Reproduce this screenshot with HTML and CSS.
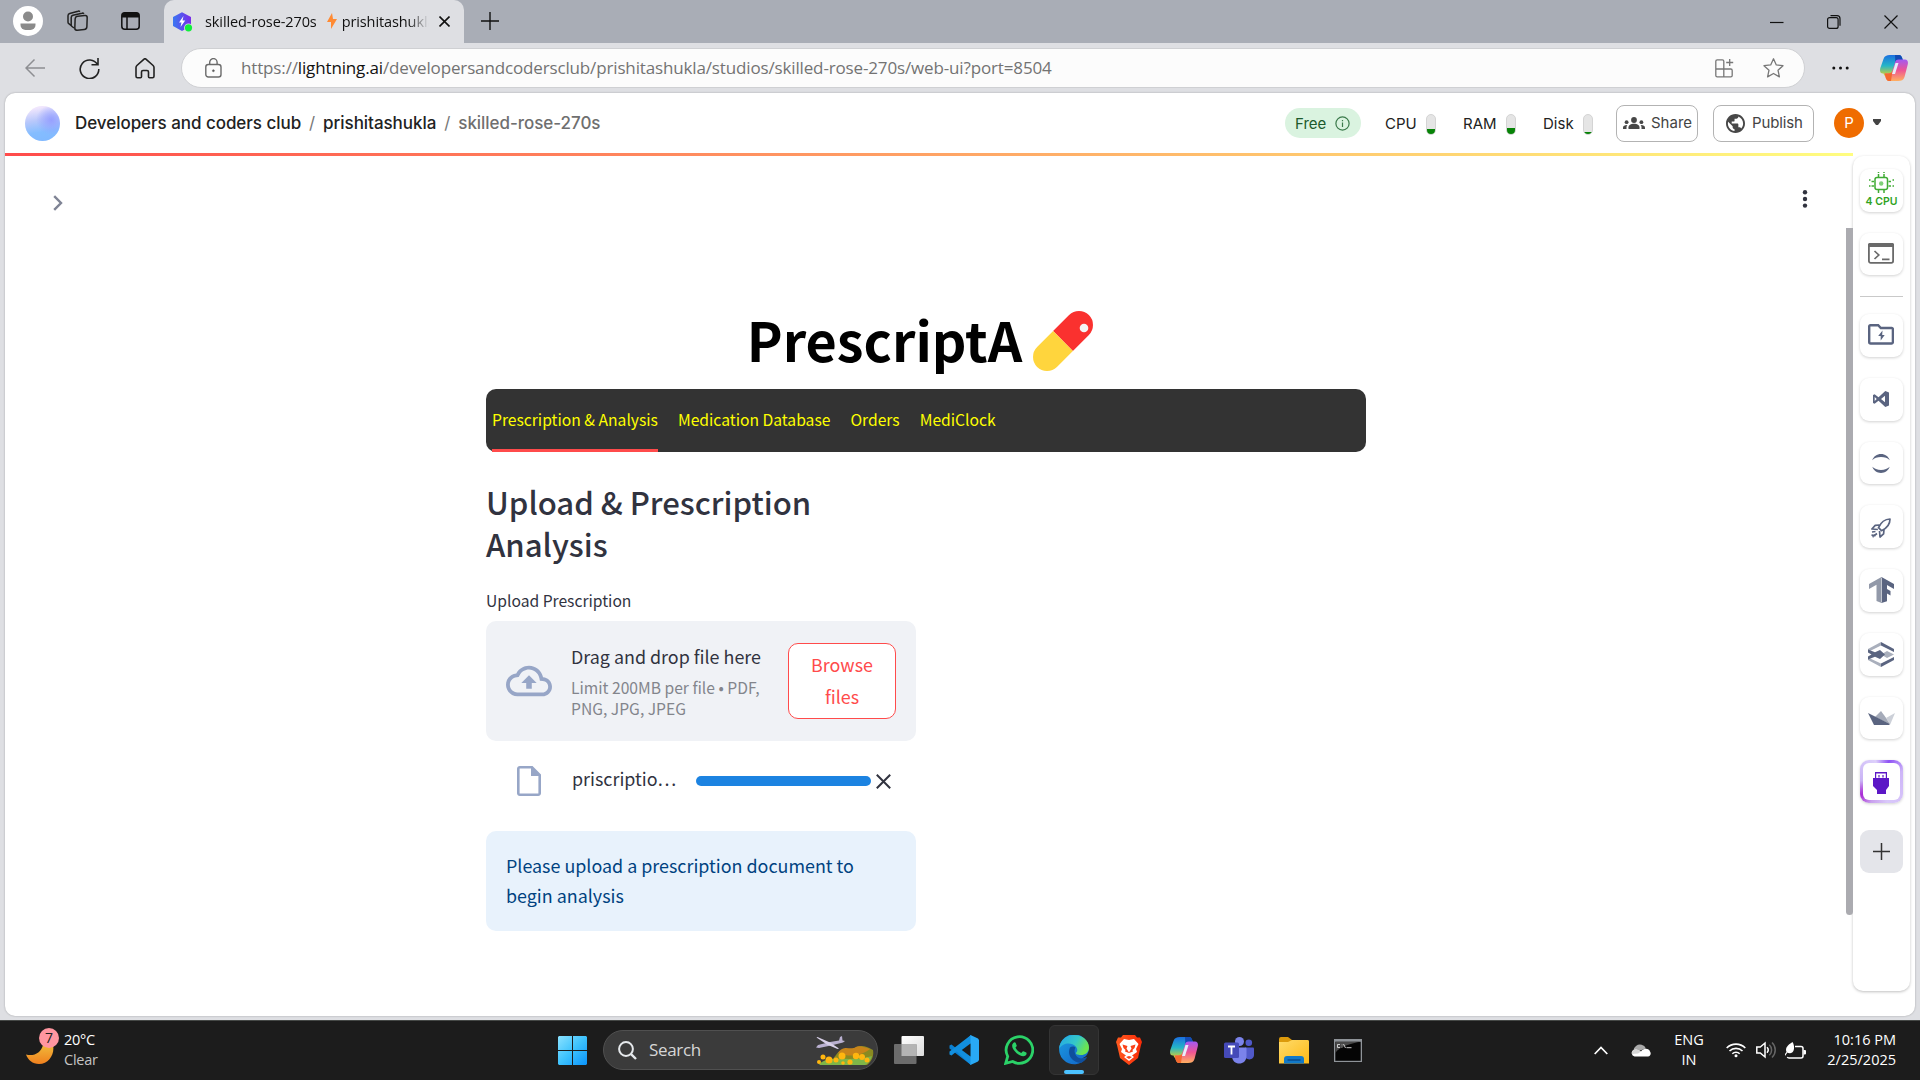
FILE: index.html
```html
<!DOCTYPE html>
<html lang="en">
<head>
<meta charset="utf-8">
<title>skilled-rose-270s</title>
<link rel="stylesheet" href="styles.css">
</head>
<body>
<div class="titlebar">
  <div class="title-left">
    <svg class="profile" width="30" height="30" viewBox="0 0 30 30"><circle cx="15" cy="15" r="15" fill="#fff"/><circle cx="15" cy="10.500" r="5" fill="#8b8b8b"/><path d="M7.500 17.500h15v1.500a5 5 0 0 1-5 5h-5a5 5 0 0 1-5-5z" fill="#8b8b8b"/></svg>
    <svg class="spaces" width="22" height="22" viewBox="0 0 22 22" fill="none" stroke="#222" stroke-width="1.500"><rect x="9" y="6" width="12" height="14" rx="2.500" transform="rotate(2 15 13) skewY(-8) translate(0 2)"/><path d="M8 18l-2-1.500a2 2 0 0 1-.8-1.700V7.500a2.500 2.500 0 0 1 1.700-2.300L16 3.200a2 2 0 0 1 2 .6M5 15.500l-2.200-1.800a2 2 0 0 1-.8-1.500V5.800a2.500 2.500 0 0 1 1.700-2.300L12 1.200a2 2 0 0 1 2 .4"/></svg>
    <svg class="tabmenu" width="19" height="18" viewBox="0 0 19 18" fill="none" stroke="#111" stroke-width="1.500"><rect x=".8" y=".8" width="17.400" height="16.400" rx="3"/><path d="M6 5v12"/><path d="M1 3.500a3 3 0 0 1 3-3h11a3 3 0 0 1 3 3V5.500H1z" fill="#111" stroke="none"/></svg>
  </div>
  <div class="tab">
    <svg width="20" height="20" viewBox="0 0 20 20"><defs><linearGradient id="hx" x1="0" x2="1"><stop offset="0" stop-color="#3a78f2"/><stop offset="1" stop-color="#7a2be8"/></linearGradient></defs><path d="M9 .3L18 5v9l-9 5-9-5V5z" fill="url(#hx)"/><path d="M10.500 4L6 10.500h2.500L7.500 15l4.700-6.500H9.500z" fill="#fff"/><circle cx="15.500" cy="15.800" r="4.400" fill="#dedfe3"/><circle cx="15.500" cy="15.800" r="3.600" fill="#12ee3c"/></svg>
    <div class="tab-title"><span>skilled-rose-270s</span><svg width="10" height="16" viewBox="0 0 10 16"><path d="M5 0L0 9h4v7l6-10H6z" fill="#ff8a33"/></svg><span>prishitashukla</span></div>
    <svg class="tab-close" width="11" height="11" viewBox="0 0 11 11" stroke="#111" stroke-width="1.600"><path d="M.5 .5l10 10M10.500 .5l-10 10"/></svg>
  </div>
  <svg class="newtab" width="18" height="18" viewBox="0 0 18 18" stroke="#111" stroke-width="1.400"><path d="M9 0v18M0 9h18"/></svg>
  <div class="window-buttons">
    <svg width="14" height="14" viewBox="0 0 14 14" fill="none" stroke="#111"><path d="M0 7.500h13.500" stroke-width="1.200"/></svg>
    <svg width="14" height="14" viewBox="0 0 14 14" fill="none" stroke="#111" stroke-width="1.200"><rect x=".6" y="2.600" width="10.500" height="10.800" rx="2"/><path d="M3.500 .7h6.500a3 3 0 0 1 3 3v7"/></svg>
    <svg width="14" height="14" viewBox="0 0 14 14" stroke="#111" stroke-width="1.200"><path d="M.5 .5l13 13M13.500 .5l-13 13"/></svg>
  </div>
</div>
<div class="toolbar">
  <svg class="nav-back" width="20" height="20" viewBox="0 0 20 20" fill="none" stroke="#8d8e92" stroke-width="1.500"><path d="M20 10H1M9.500 1.500L1 10l8.500 8.500"/></svg>
  <svg class="nav-reload" width="21" height="21" viewBox="0 0 21 21" fill="none" stroke="#222" stroke-width="1.600"><path d="M18.500 6.500A9.300 9.300 0 1 0 19.800 11M19 0v6.700h-6.500"/></svg>
  <svg class="nav-home" width="20" height="21" viewBox="0 0 20 21" fill="none" stroke="#222" stroke-width="1.600"><path d="M1 9.500c0-.8.300-1.400.9-2L8.800 1.300a1.800 1.800 0 0 1 2.400 0l6.900 6.200c.6.600.9 1.200.9 2v8.700a1.500 1.500 0 0 1-1.500 1.500h-3a1 1 0 0 1-1-1V14a1.500 1.500 0 0 0-1.500-1.500H8A1.500 1.500 0 0 0 6.500 14v4.700a1 1 0 0 1-1 1h-3A1.500 1.500 0 0 1 1 18.200z"/></svg>
  <div class="address">
    <svg class="lock" width="17" height="20" viewBox="0 0 17 20" fill="none" stroke="#6b6b6b" stroke-width="1.400"><rect x=".8" y="6.500" width="15.200" height="12.500" rx="2.500"/><path d="M4.700 6.500V4.300a3.700 3.700 0 0 1 7.400 0v2.200"/><circle cx="8.400" cy="12.700" r="1" fill="#555" stroke-width=".6"/></svg>
    <div class="url">https://<b>lightning.ai</b><span>/developersandcodersclub/prishitashukla/studios/skilled-rose-270s/web-ui?port=8504</span></div>
    <svg class="apps" width="19" height="19" viewBox="0 0 19 19" fill="none" stroke="#777" stroke-width="1.300"><path d="M8.800 10V2.200a1.400 1.400 0 0 0-1.400-1.400H2.200A1.400 1.400 0 0 0 .8 2.200v14.300a1.400 1.400 0 0 0 1.400 1.400h13.600a1.400 1.400 0 0 0 1.400-1.400v-5.100a1.400 1.400 0 0 0-1.400-1.400H.8M8.800 10v8M14.700 0v7M11.200 3.500h7"/></svg>
    <svg class="star" width="21" height="20" viewBox="0 0 21 20" fill="none" stroke="#777" stroke-width="1.300" stroke-linejoin="round"><path d="M10.500 .8l2.800 6.100 6.700.8-5 4.500 1.400 6.700-5.900-3.400-5.900 3.400L6 12.200 1 7.700l6.700-.8z"/></svg>
  </div>
  <svg class="dots" width="17" height="4" viewBox="0 0 17 4" fill="#111"><circle cx="1.800" cy="2" r="1.500"/><circle cx="8.500" cy="2" r="1.500"/><circle cx="15.200" cy="2" r="1.500"/></svg>
  <svg class="copilot" width="28" height="26" viewBox="0 0 28 26"><use href="#copilot"/></svg>
</div>
<div class="page">
  <header class="head">
    <i class="org"></i>
    <nav class="crumbs"><span class="c1">Developers and coders club</span><i>/</i><span class="c2">prishitashukla</span><i>/</i><span class="c3">skilled-rose-270s</span></nav>
    <div class="free"><span>Free</span><svg width="15" height="15" viewBox="0 0 15 15" fill="none" stroke="#3b7a4b" stroke-width="1.200"><circle cx="7.500" cy="7.500" r="6.600"/><path d="M7.500 6.500v4.500M7.500 4v1.300"/></svg></div>
    <div class="meter m1"><span>CPU</span><i class="gauge"><b class="lv4"></b></i></div>
    <div class="meter m2"><span>RAM</span><i class="gauge"><b class="lv5"></b></i></div>
    <div class="meter m3"><span>Disk</span><i class="gauge"><b class="lv2"></b></i></div>
    <div class="btn share"><svg width="22" height="12" viewBox="0 0 22 12" fill="#474747"><circle cx="11" cy="3" r="2.900"/><path d="M5.500 12v-1.700C5.500 8 8 6.800 11 6.800s5.500 1.200 5.500 3.500V12z"/><circle cx="3.600" cy="5.200" r="1.900"/><circle cx="18.400" cy="5.200" r="1.900"/><path d="M0 12v-1.300c0-1.600 1.600-2.700 4.400-2.600-.6.700-.9 1.400-.9 2.200V12zM22 12v-1.300c0-1.600-1.600-2.700-4.400-2.600.6.700.9 1.400.9 2.200V12z"/></svg><span>Share</span></div>
    <div class="btn publish"><svg width="19" height="19" viewBox="2 2 20 20" fill="#474747"><path d="M12 2C6.480 2 2 6.480 2 12s4.480 10 10 10 10-4.480 10-10S17.520 2 12 2zm-1 17.930c-3.950-.49-7-3.850-7-7.930 0-.62.080-1.210.21-1.790L9 15v1c0 1.100.9 2 2 2v1.930zm6.900-2.540c-.26-.81-1-1.390-1.900-1.390h-1v-3c0-.55-.45-1-1-1H8v-2h2c.55 0 1-.45 1-1V7h2c1.100 0 2-.9 2-2v-.41c2.930 1.190 5 4.060 5 7.410 0 2.080-.8 3.970-2.100 5.390z"/></svg><span>Publish</span></div>
    <div class="avatar">P</div>
    <svg class="caret" width="8" height="6" viewBox="0 0 8 6"><path d="M0 0h8v2L5 6H3L0 2z" fill="#444"/></svg>
  </header>
  <div class="body">
    <main class="canvas">
      <div class="rainbow"></div>
      <div class="app-top">
        <svg class="expand" width="10" height="16" viewBox="0 0 10 16" fill="none" stroke="#7f8495" stroke-width="2.400"><path d="M1.200 1.200L8 8l-6.800 6.800"/></svg>
        <svg width="6" height="18" viewBox="0 0 6 18" fill="#31333f"><circle cx="3" cy="2.300" r="2.200"/><circle cx="3" cy="9" r="2.200"/><circle cx="3" cy="15.600" r="2.200"/></svg>
      </div>
      <div class="column">
        <h1>PrescriptA <svg width="60" height="60" viewBox="0 0 60 60"><g transform="rotate(45 30 30)"><path d="M16 30V7.400a14 14 0 0 1 28 0V30z" fill="#fa312f"/><path d="M16 30v22.600a14 14 0 0 0 28 0V30z" fill="#ffd53d"/></g><circle cx="51" cy="17" r="4.300" fill="#f4f4f4"/></svg></h1>
        <div class="tabs"><span class="active">Prescription &amp; Analysis</span><span>Medication Database</span><span>Orders</span><span>MediClock</span></div>
        <section class="upload">
          <h2>Upload &amp; Prescription Analysis</h2>
          <label>Upload Prescription</label>
          <div class="dropzone">
            <svg width="46" height="32" viewBox="0 4 24 16" fill="#97a6c7"><path d="M19.350 10.040C18.670 6.590 15.640 4 12 4 9.110 4 6.600 5.640 5.350 8.040 2.340 8.360 0 10.910 0 14c0 3.310 2.690 6 6 6h13c2.760 0 5-2.240 5-5 0-2.640-2.050-4.780-4.650-4.960zM19 18H6c-2.210 0-4-1.790-4-4 0-2.050 1.530-3.760 3.560-3.970l1.070-.11.5-.95C8.080 7.140 9.940 6 12 6c2.620 0 4.880 1.860 5.390 4.430l.3 1.500 1.530.11c1.560.1 2.780 1.410 2.780 2.960 0 1.650-1.350 3-3 3zM8 13h2.550v3h2.900v-3H16l-4-4z"/></svg>
            <div class="drop-text"><p>Drag and drop file here</p><small>Limit 200MB per file • PDF,<br>PNG, JPG, JPEG</small></div>
            <div class="browse">Browse<br>files</div>
          </div>
          <div class="file">
            <svg width="24" height="30" viewBox="0 0 24 30"><path d="M1.300 2.800A1.500 1.500 0 0 1 2.800 1.300H15L22.700 9v18.200a1.500 1.500 0 0 1-1.500 1.500H2.800a1.500 1.500 0 0 1-1.500-1.500z" fill="none" stroke="#97a6c7" stroke-width="2.600"/><path d="M14 1l9 9h-9z" fill="#97a6c7"/></svg>
            <span>priscriptio…</span>
            <i class="bar"></i>
            <svg width="15" height="15" viewBox="0 0 15 15" stroke="#31333f" stroke-width="2"><path d="M.8 .8l13.400 13.400M14.200 .8L.8 14.200"/></svg>
          </div>
          <div class="alert">Please upload a prescription document to<br>begin analysis</div>
        </section>
      </div>
      <i class="scroll"></i>
    </main>
    <aside class="rail">
      <div class="tool cpu"><svg width="25" height="23" viewBox="0 0 25 23" fill="none" stroke="#3fab33" stroke-width="1.500"><rect x="6" y="5.500" width="12.500" height="12" rx="2"/><circle cx="12.200" cy="11.500" r="2.200" fill="#7fd078" stroke="none"/><path d="M9.500 5V2M15 5V2M9.500 18v3M15 18v3M2.500 9.500H5M2.500 14H5M19.500 9.500H22M19.500 14H22M0 8h1.500M0 14h1.500M23.500 8H25M23.500 14H25M9.500 0v1M15 0v1"/></svg><span>4 CPU</span></div>
      <div class="tool term"><svg width="26" height="21" viewBox="0 0 26 21"><rect x=".9" y=".9" width="24.200" height="19" rx="1.800" fill="none" stroke="#6a6a6a" stroke-width="1.800"/><path d="M0 1.500A1.500 1.500 0 0 1 1.500 0h23A1.500 1.500 0 0 1 26 1.500V4H0z" fill="#6a6a6a"/><path d="M6.500 8l4.300 4-4.300 4M14 16.300h7.500" fill="none" stroke="#6a6a6a" stroke-width="1.700"/></svg></div>
      <i class="rule"></i>
      <div class="tool folder"><svg width="26" height="21" viewBox="0 0 26 21"><path d="M1.200 18V2.500a1.200 1.200 0 0 1 1.200-1.300h7.800L12.800 4h10.900a1.200 1.200 0 0 1 1.200 1.200V18a1.500 1.500 0 0 1-1.500 1.500H2.700A1.500 1.500 0 0 1 1.200 18z" fill="none" stroke="#5a6480" stroke-width="2.400"/><path d="M14.500 6.500l-4.300 5.500h2.500v4.500l4-5.500h-2.500z" fill="#5a6480"/></svg></div>
      <div class="tool"><svg width="16" height="16" viewBox="0 0 16 16"><path d="M12.300 0L16 1.500v13L12.300 16 5.500 9.800 1.600 12.800 0 12V4l1.600-.8L5.500 6.200zM12 4.800L8 8l4 3.200zM1.700 6v4l2-2z" fill="#5a6480" fill-rule="evenodd"/></svg></div>
      <div class="tool"><svg width="18" height="19" viewBox="0 0 18 19" fill="#5a6480"><path d="M.3 6.200C1.500 2.500 4.900 0 9 0s7.500 2.500 8.700 6.200C15.800 4.200 12.600 3 9 3S2.200 4.200.3 6.200zM.3 12.800c1.200 3.700 4.600 6.200 8.700 6.200s7.500-2.500 8.700-6.200C15.800 14.800 12.600 16 9 16s-6.800-1.200-8.700-3.200z"/></svg></div>
      <div class="tool rocket"><svg width="20" height="20" viewBox="0 0 20 20" fill="none" stroke="#5a6480" stroke-width="1.700" stroke-linejoin="round"><path d="M19 1c-5 .1-9 3-11.500 8.700l3 3C16.500 10 19 6 19 1zM8.500 7L4.200 7.400.9 11l6 .5M13 11.500l-.4 4.300L9 19l-.5-6M4.500 13.500L1 14M6 15.500L1.500 19M5 17.500L.5 17.200"/></svg></div>
      <div class="tool"><svg width="25" height="26" viewBox="0 0 25 26"><path d="M12.500 0L0 7v5l7.500-4.200V24l5 2z" fill="#9299a9"/><path d="M12.500 0L25 7v5l-7-4v4l3.500 2v4.500l-3.500-2v7.700L12.500 26z" fill="#5a6480"/><path d="M12.500 1v24" stroke="#c3c7d0" stroke-width="1"/></svg></div>
      <div class="tool"><svg width="26" height="25" viewBox="0 0 26 25"><path d="M13 0L0 7v3l13-6.500z" fill="#a9afbc"/><path d="M13 0l13 7v3L13 3.500z" fill="#5a6480"/><path d="M0 15.500V18l13 7v-3.500z" fill="#a9afbc"/><path d="M13 21.500l13-6.500v3l-13 7z" fill="#5a6480"/><path d="M13 12.500l6-3.500 7 3.500-7 3.500z" fill="#a9afbc"/><path d="M0 7.500l7 2.700L12 8l5 4.500-5 4.500-5-2.200-7 2.700v-3l3.500-2L0 10.500z" fill="#5a6480"/></svg></div>
      <div class="tool"><svg width="27" height="14" viewBox="0 0 27 14"><path d="M7 6L13 0l5.500 7.500L22 13z" fill="#a5abb9"/><path d="M27 2l-4.800 11.500L18 7z" fill="#ccd0d8"/><path d="M0 2l22 11-1 1H6z" fill="#5a6480"/></svg></div>
      <div class="tool port"><svg width="16" height="22" viewBox="0 0 16 22"><path d="M2 0h12v6h2v8l-3 4v4H4v-4l-4-4V6h2z" fill="#5c17c6"/><path d="M3.200 1.500h9.600V6H3.200z" fill="#fff"/><path d="M6 3v2.500M10 3v2.500" stroke="#5c17c6" stroke-width="1.200"/></svg></div>
      <div class="tool plus"><svg width="17" height="17" viewBox="0 0 17 17" stroke="#333" stroke-width="1.500"><path d="M8.500 0v17M0 8.500h17"/></svg></div>
    </aside>
  </div>
</div>
<footer class="taskbar">
  <div class="weather">
    <div class="moon"><svg width="28" height="20" viewBox="0 0 28 20"><defs><linearGradient id="mn" x2="0" y2="1"><stop stop-color="#f0b93a"/><stop offset="1" stop-color="#f0801e"/></linearGradient></defs><path d="M0 9.500c8 2 15-1.500 17-9.500h10c2 9-4 19-14 19C6.500 19 2 15 0 9.500z" fill="url(#mn)"/></svg><b>7</b></div>
    <p>20°C<br><span>Clear</span></p>
  </div>
  <div class="apps-row">
    <div class="slot"><svg width="29" height="29" viewBox="0 0 29 29"><defs><linearGradient id="win" x2="1" y2="1"><stop stop-color="#8be2ff"/><stop offset=".5" stop-color="#3dc2fd"/><stop offset="1" stop-color="#0a93fb"/></linearGradient></defs><path d="M1 0h13v14H0V1zM15 0h13l1 1v13H15zM0 15h14v14H1l-1-1zM15 15h14v13l-1 1H15z" fill="url(#win)"/></svg></div>
    <div class="search">
      <svg class="glass" width="19" height="19" viewBox="0 0 19 19" fill="none" stroke="#e6e9ec" stroke-width="2"><circle cx="8" cy="8" r="6.900"/><path d="M12.800 12.800l5.200 5.200" stroke-width="2.400"/></svg>
      <span>Search</span>
      <svg class="art" width="58" height="31" viewBox="0 0 58 31"><path d="M20 20C27 10 35 17 40 12c6-2 10-1 17 3 1 6-1 11-6 15H12z" fill="#8a8a21"/><path d="M22 18c6-9 12-2 18-6 3-2 9 0 14 2-8 6-18 9-32 4z" fill="#c8841a"/><path d="M3 29C15 19 34 28 56 21c-1 4-4 8-7 9H4z" fill="#7fb648"/><g fill="#ffb60f"><circle cx="3" cy="27" r="2"/><circle cx="7" cy="22" r="2.500"/><circle cx="13" cy="25" r="3.500"/><circle cx="20" cy="25" r="2.500"/><circle cx="26" cy="21" r="3.500"/><circle cx="34" cy="27" r="2.600"/><circle cx="40" cy="21" r="3.200"/><circle cx="46" cy="22" r="3"/><circle cx="51" cy="25" r="2.500"/><circle cx="27" cy="28" r="1.800"/></g><path d="M0 12.500L2 10l12-3 9-1.500L24 2l2-1 .5 4.500L29 6l-2 1.500-12 3L3 13z" fill="#b9b0d0"/><path d="M.5 2.500l1-.5L14 7.500l9 6-1.500.5L11 9.500z" fill="#d8d0e8"/></svg>
    </div>
    <div class="slot"><svg width="30" height="28" viewBox="0 0 30 28"><defs><linearGradient id="tv" x2="1" y2="1"><stop stop-color="#fff"/><stop offset="1" stop-color="#dcdcdc"/></linearGradient></defs><rect x="7.500" width="22.500" height="20" rx="1" fill="url(#tv)"/><rect y="8" width="22.500" height="20" rx="1" fill="#6c6c6c"/><path d="M7.500 8h15v12h-15z" fill="#b4b4b4"/></svg></div>
    <div class="slot"><svg width="30" height="30" viewBox="0 0 30 30"><path d="M22 0L7.500 13.500 2.500 9.500 .5 10.500v3L22 30l.5-6.500z" fill="#0b7fd0"/><path d="M22 30L7.500 16.500l-5 4-2-1v-3L22 0l.5 6.500z" fill="#128fdf"/><path d="M21.500 0l7.500 3.500 1 1.500v20l-1 1.500-7.500 3.500z" fill="#29a9f5"/><path d="M21.500 8.500v13L12.800 15z" fill="#1c1c1c"/></svg></div>
    <div class="slot"><svg width="30" height="30" viewBox="0 0 30 30"><path d="M1.700 28.300l2-7A13.300 13.300 0 1 1 8.700 26.500z" fill="none" stroke="#2bd268" stroke-width="2.800"/><path d="M9.300 8c.8-.9 2-.8 2.400 0l1 2.500c.3.700-.9 1.600-1.200 2.200 1.400 2.700 3.200 4.200 5.700 5.200.9-.6 1.500-1.900 2.300-1.600l2.700 1.300c.8.600.2 2.300-.8 3-2.200 1.500-6.300-.2-9-2.600-3-2.800-6-7-3.100-10z" fill="#2bd268"/></svg></div>
    <div class="slot"><div class="running"><svg width="30" height="30" viewBox="0 0 30 30"><defs><linearGradient id="e1" x1="0" x2="1" y2=".4"><stop stop-color="#22a5e8"/><stop offset=".6" stop-color="#35c8c8"/><stop offset="1" stop-color="#6be550"/></linearGradient><linearGradient id="e2" x2="1" y2="1"><stop stop-color="#1b9de2"/><stop offset="1" stop-color="#1261c5"/></linearGradient></defs><path d="M30 12.500A15 15 0 1 0 28 22c-2 1-4 1.500-6 1.500 5-1 8-5 8-11z" fill="url(#e2)"/><path d="M0 14C1 5 7.500 0 15 0c9 0 15 6 15 12.500 0 5-4 7.500-8 7.500-3.500 0-5.500-1-5-2.300 2-1.500 1.500-4.500-.5-6.500C12 6.500 3 8 0 14z" fill="url(#e1)"/><path d="M11 12.500c-3.500 8 3 15 11 15.500 2-1 4.500-3 6-5.500-4 2-10 1.500-12-4-1-3 0-5 .5-6-1-1.500-4-1.500-5.500 0z" fill="#0f4f9d"/></svg></div></div>
    <div class="slot"><svg width="26" height="30" viewBox="0 0 26 30"><defs><linearGradient id="br" x2="1"><stop stop-color="#ff5a1f"/><stop offset="1" stop-color="#fa2b08"/></linearGradient></defs><path d="M7 0h12l2 2.500h3L26 7l-1 3-3 13-9 7-9-7L1 10 0 7l2-4.500h3z" fill="url(#br)"/><path d="M8 4l5 1 5-1 4.500 5-2.500 5 1 3-5 3.500 2 1.500-5 4-5-4 2-1.500L5 17l1-3-2.500-5z" fill="#fff"/><path d="M6.500 9.500l5 1.500-1 2.500 2.500 4 2.500-4-1-2.500 5-1.500-1 3.500-2 2 .5 1.500-4 1.500-4-1.500.500-1.500-2-2zM10 22l3-1 3 1-3 2z" fill="#f9421a"/></svg></div>
    <div class="slot"><svg width="28" height="26" viewBox="0 0 28 26"><defs><linearGradient id="c1" x2="0" y2="1"><stop stop-color="#1b6fe0"/><stop offset=".5" stop-color="#25b6c7"/><stop offset="1" stop-color="#e8d321"/></linearGradient><linearGradient id="c2" x2="0" y2="1"><stop stop-color="#a259f3"/><stop offset=".5" stop-color="#ee5494"/><stop offset="1" stop-color="#ffb060"/></linearGradient></defs><g id="copilot"><path d="M10 0h9c2 0 3 2 3.500 4l1 3.500h-4c-2 0-3 1-3.500 3l-2.500 8c-.5 2-1 3-3.500 3H7c-2 0-3-1-3.500-3H3c-3 0-3.500-3-2.500-6L3.500 4C4.500 1 6.500 0 10 0z" fill="url(#c1)"/><path d="M15 0h4c2 0 3 2 3.500 4l1 3.500h-4c-2 0-3 1-3.500 3L15.500 12z" fill="#124bb5"/><path d="M18 26H9c-2 0-3-2-3.500-4l-.8-3.500H8c3 0 4-1 4.500-3l2.500-8c.5-2 1.500-3 3.500-3H25c3 0 3.500 3 2.500 6L24.500 22c-1 3-3 4-6.500 4z" fill="url(#c2)"/><path d="M4.700 18.500H8c3 0 4-1 4.500-3L11 26H9c-2 0-3-2-3.500-4z" fill="#f4692e"/><path d="M15.500 8h3l-3.500 11h-3z" fill="#e9eefb"/></g></svg></div>
    <div class="slot"><svg width="30" height="27" viewBox="0 0 30 27"><circle cx="15.500" cy="4.500" r="4.500" fill="#7b83eb"/><circle cx="24.800" cy="5.800" r="3.300" fill="#5059c9"/><path d="M21 10.500h8a1 1 0 0 1 1 1V18c0 4-5 6-8 3z" fill="#5059c9"/><path d="M8 10.500h13.500a1 1 0 0 1 1 1V19c0 10-14.500 10-14.500 0z" fill="#7b83eb"/><rect y="5.500" width="15" height="15.500" rx="1.500" fill="#454ab8"/><path d="M4 9.500h7M7.500 9.500v8" stroke="#fff" stroke-width="1.800"/></svg></div>
    <div class="slot"><svg width="30" height="27" viewBox="0 0 30 27"><defs><linearGradient id="fo" x2="1" y2="1"><stop stop-color="#ffdb6a"/><stop offset="1" stop-color="#fdb916"/></linearGradient></defs><path d="M0 7V2a2 2 0 0 1 2-2h7l4 3h15a2 2 0 0 1 2 2v4z" fill="#dc9a0c"/><path d="M0 5h9l4-2h15.500A1.500 1.500 0 0 1 30 4.500V26.500H0z" fill="url(#fo)"/><path d="M5 26.500V22a3 3 0 0 1 3-3h14a3 3 0 0 1 3 3v4.500z" fill="#1279c8"/><path d="M8.500 23h13" stroke="#0a4e92" stroke-width="1.600"/></svg></div>
    <div class="slot"><svg width="28" height="23" viewBox="0 0 28 23"><rect width="28" height="23" fill="#8f9499"/><rect x="1.300" y="2.800" width="25.400" height="19" fill="#050505"/><path d="M1.300 2.800h25.400C18 4 5 8 1.300 14z" fill="#484848"/><path d="M6 5.500H3.500v3H6M8 5.500v.8M8 7.800v.7M9.500 5l2 4M12.500 8.700h5" stroke="#ddd" fill="none" stroke-width=".9"/></svg></div>
  </div>
  <div class="tray">
    <svg class="up" width="14" height="9" viewBox="0 0 14 9" fill="none" stroke="#fff" stroke-width="1.700"><path d="M.7 8L7 1.500 13.300 8"/></svg>
    <svg class="cloud" width="20" height="13" viewBox="0 0 20 13"><path d="M3 8.500a5.500 5.500 0 0 1 2-6.500 6.500 6.500 0 0 1 10 2.500z" fill="#aaa"/><path d="M3.500 12.500A3.500 3.500 0 0 1 2.500 6C5 4.500 8 6 10 7.500 12 4 18 3.500 19 7.500c1.500 2 .5 5-2 5z" fill="#fff"/><path d="M2.500 6c2.500-1.500 5.500 0 7.500 1.500L7 9.500 1 10c-.5-2 0-3.300 1.500-4z" fill="#d6d6d6"/></svg>
    <p class="lang">ENG<br>IN</p>
    <svg class="wifi" width="20" height="16" viewBox="0 0 20 16" fill="none" stroke="#fff" stroke-width="1.600"><path d="M.7 6a13 13 0 0 1 18.600 0M3.500 9a9.300 9.300 0 0 1 13 0M6.300 11.800a5.300 5.300 0 0 1 7.400 0"/><circle cx="10" cy="13.700" r="1.500" fill="#fff" stroke="none"/></svg>
    <svg class="vol" width="20" height="18" viewBox="0 0 20 18" fill="none" stroke="#fff" stroke-width="1.500"><path d="M.8 6v6h3.500L9 16V2L4.300 6z"/><path d="M11 6.300a4 4 0 0 1 0 5.400"/><path d="M13.300 3.800a7 7 0 0 1 0 10.400M16 1.500a10.300 10.300 0 0 1 0 15" stroke="#666"/></svg>
    <svg class="batt" width="21" height="17" viewBox="0 0 21 17"><path d="M10 4.500h6a2 2 0 0 1 2 2v7.500a2 2 0 0 1-2 2H4a2 2 0 0 1-1.700-1" fill="none" stroke="#fff" stroke-width="1.500"/><path d="M18.500 8h1.500a1 1 0 0 1 1 1v2.500a1 1 0 0 1-1 1h-1.500zM7.500 0c2.500 4 2 10-1.500 11-2 .5-3 0-3.500-.5L0 14v-2l1.500-2C0 6 2.500 3 7.500 0z" fill="#fff"/></svg>
    <p class="clock">10:16 PM<br>2/25/2025</p>
  </div>
</footer>
</body>
</html>
```
FILE: styles.css
```css
* { box-sizing: border-box; }
body {
  margin: 0;
  width: 1920px;
  height: 1080px;
  overflow: hidden;
  display: flex;
  flex-direction: column;
  background: #dedfe3;
  font-family: "Open Sans", "Noto Sans", sans-serif;
}
svg { display: block; flex: none; }
p, h1, h2 { margin: 0; font-weight: 400; }

/* Browser chrome */
.titlebar { height: 43px; background: #a9adb6; display: flex; align-items: center; }
.title-left { width: 164px; display: flex; align-items: center; padding: 0 0 1px 13px; }
.spaces { margin-left: 23px; }
.tabmenu { margin-left: 33px; }
.tab {
  width: 300px;
  height: 43px;
  padding-left: 9px;
  display: flex;
  align-items: center;
  background: #dedfe3;
  border-radius: 10px 10px 0 0;
}
.tab-title {
  margin: -1px 0 0 12px;
  width: 226px;
  display: flex;
  align-items: center;
  overflow: hidden;
  white-space: nowrap;
  font-size: 14.5px;
  letter-spacing: -.1px;
  color: #111;
  -webkit-mask-image: linear-gradient(90deg, #000 90%, transparent 99%);
  mask-image: linear-gradient(90deg, #000 90%, transparent 99%);
}
.tab-title svg { margin: 0 5px 0 10px; }
.tab-close { margin-left: 8px; }
.newtab { margin: -1px 0 0 17px; }
.window-buttons { margin-left: auto; padding-right: 22px; display: flex; gap: 43px; }

.toolbar { height: 50px; display: flex; align-items: center; }
.nav-back { margin-left: 25px; }
.nav-reload { margin-left: 34px; }
.nav-home { margin-left: 35px; }
.address {
  width: 1624px;
  height: 40px;
  margin-left: 26px;
  border: 1px solid #cfd0d3;
  border-radius: 20px;
  background: #fcfcfc;
  display: flex;
  align-items: center;
}
.lock { margin-left: 23px; }
.url { margin: -2px 0 0 19px; width: 1437px; font-size: 17px; letter-spacing: -.145px; color: #737373; white-space: nowrap; }
.url b { font-weight: 400; color: #111; }
.apps { margin-left: 37px; }
.star { margin-left: 29px; }
.dots { margin-left: 27px; }
.copilot { margin-left: 31px; }

/* Studio page */
.page {
  height: 923px;
  margin: 0 5px;
  background: #fff;
  border-radius: 10px;
  box-shadow: 0 0 2px rgba(0, 0, 0, .3);
  display: flex;
  flex-direction: column;
}
.head { height: 60px; display: flex; align-items: center; font-family: Inter, Roboto, sans-serif; font-size: 15px; color: #222; }
.org {
  width: 35px;
  height: 35px;
  margin-left: 20px;
  border-radius: 50%;
  background: radial-gradient(circle at 75% 40%, #97a0ff 0, rgba(151, 160, 255, 0) 45%), linear-gradient(170deg, #f0e6fd 10%, #b9c8fb 40%, #84bdff 70%, #80b8ff);
}
.crumbs { width: 530px; margin-left: 15px; display: flex; font-size: 17px; font-weight: 500; letter-spacing: -.045px; white-space: nowrap; }
.crumbs i { width: 22px; text-align: center; font-style: normal; font-weight: 400; color: #777; }
.crumbs .c3 { color: #6f6f6f; }
.free {
  margin-left: 680px;
  width: 76px;
  height: 30px;
  padding-left: 10px;
  border-radius: 15px;
  background: #daf3e0;
  color: #1c5a2c;
  display: flex;
  align-items: center;
  gap: 9px;
}
.meter { display: flex; align-items: center; justify-content: space-between; white-space: nowrap; }
.m1 { width: 51px; margin-left: 24px; }
.m2 { width: 53px; margin-left: 27px; }
.m3 { width: 50px; margin-left: 27px; }
.gauge { width: 10px; height: 21px; margin-top: 3px; border-radius: 5px; background: #e5e5e5; border: 1px solid #d4d4d4; overflow: hidden; display: flex; align-items: flex-end; }
.gauge b { width: 100%; background: #078307; }
.lv5 { height: 6px; }
.lv4 { height: 5px; }
.lv2 { height: 2px; }
.btn { height: 37px; border: 1px solid #b3b3b3; border-radius: 8px; display: flex; align-items: center; color: #444; font-size: 15px; }
.btn span { margin-top: -1px; }
.share { width: 82px; margin-left: 23px; padding-left: 6px; gap: 6px; }
.publish { width: 101px; margin-left: 15px; padding-left: 12px; gap: 7px; }
.publish span { letter-spacing: -.15px; }
.avatar { width: 30px; height: 30px; margin-left: 20px; border-radius: 50%; background: #ef6c00; color: #fff; text-align: center; line-height: 30px; font-size: 15px; }
.caret { margin: -3px 0 0 9px; }

.body { flex: 1; display: flex; min-height: 0; }
.canvas { width: 1848px; position: relative; font-family: "Noto Sans CJK JP", "Noto Sans", sans-serif; color: #31333f; }
.rainbow { height: 3px; background: linear-gradient(90deg, #ff4b4b, #ff8d5f 38%, #ffc36d 68%, #fffd80); }
.app-top { display: flex; justify-content: space-between; height: 60px; padding: 34px 45px 0 48px; }
.app-top .expand { margin-top: 5px; }
.scroll { position: absolute; right: 0; top: 75px; width: 7px; height: 687px; border-radius: 0 0 4px 4px; background: #ababb0; }

.column { width: 880px; margin: 84px 0 0 481px; display: flex; flex-direction: column; }
h1 {
  height: 78px;
  line-height: 78px;
  margin-bottom: 11px;
  padding-right: 12px;
  display: flex;
  align-items: center;
  justify-content: center;
  gap: 11px;
  font-size: 53.9px;
  font-weight: 700;
  color: #000;
}
h1 svg { margin-top: 4px; }
.tabs { height: 63px; padding-left: 6px; border-radius: 10px; background: #333; color: #ff0; display: flex; gap: 20px; font-size: 15.67px; line-height: 62px; white-space: nowrap; }
.tabs .active { border-bottom: 3px solid #ff4b4b; }

.upload { width: 430px; display: flex; flex-direction: column; }
h2 { margin-top: 29px; font-size: 31.1px; line-height: 42px; font-weight: 500; }
label { margin-top: 26px; font-size: 15.65px; line-height: 20px; }
.dropzone { height: 120px; margin-top: 10px; padding: 0 20px; border-radius: 10px; background: #f0f2f6; display: flex; align-items: center; }
.drop-text { width: 217px; margin: -3px 0 0 19px; }
.drop-text p { font-size: 17.9px; line-height: 30px; white-space: nowrap; }
.drop-text small { display: block; margin-top: 6px; font-size: 15.65px; line-height: 21px; color: #83858c; white-space: nowrap; }
.browse { width: 108px; height: 76px; padding-top: 4px; border: 1px solid #ff4b4b; border-radius: 10px; background: #fff; color: #ff4b4b; font-size: 17.9px; line-height: 32px; text-align: center; }
.file { height: 30px; margin-top: 25px; padding-left: 31px; display: flex; align-items: center; font-size: 17.9px; }
.file span { width: 124px; margin: -6px 0 0 31px; line-height: 30px; }
.bar { width: 175px; height: 10px; margin-right: 5px; border-radius: 5px; background: #1c83e1; }
.alert { height: 100px; margin-top: 35px; padding: 19px 20px; border-radius: 10px; background: #e8f2fc; color: #004280; font-size: 17.9px; line-height: 30px; white-space: nowrap; }

/* Tool rail */
.rail { width: 57px; height: 835px; margin-top: 3px; padding: 13px 7px 0; border-radius: 10px; background: #fff; box-shadow: 0 1px 3px rgba(0, 0, 0, .25); display: flex; flex-direction: column; gap: 21px; }
.tool { height: 42.7px; flex: none; border-radius: 9px; background: #fff; box-shadow: 0 1px 3px rgba(0, 0, 0, .18); display: flex; flex-direction: column; align-items: center; justify-content: center; }
.tool svg { margin-right: 1px; }
.tool span { margin-top: 1px; font: 600 10.5px/12px Inter, sans-serif; color: #2fa31e; white-space: nowrap; }
.term svg, .folder svg { margin-top: -2px; }
.rocket svg { margin-top: 3px; }
.rule { height: 1px; flex: none; margin-bottom: -4px; background: #c9c9c9; }
.port { border: 3px solid transparent; background: linear-gradient(#fff, #fff) padding-box, conic-gradient(from 20deg, #8f52f5, #cdb5f8 12%, #d9c8fa 40%, #c9a0ee 52%, #a92ad5 60%, #c9b3f5 70%, #ddd0fb 90%, #8f52f5) border-box; }
.port svg { margin-top: 2px; }
.plus { margin-top: 6px; background: #e4e5ea; box-shadow: none; }

/* Taskbar */
.taskbar { height: 60px; margin-top: 4px; border-top: 1px solid #454846; background: #1c1c1c; display: flex; color: #fff; font-size: 14.5px; line-height: 20px; }
.weather { width: 545px; padding-left: 26px; display: flex; }
.moon { width: 28px; padding-top: 24px; position: relative; }
.moon b { position: absolute; left: 13px; top: 7px; width: 20px; height: 20px; border-radius: 50%; background: #ff96a0; color: #222; font-size: 14px; font-weight: 400; text-align: center; }
.weather p { margin: 9px 0 0 10px; letter-spacing: -.25px; }
.weather span { color: #c4c4c4; }
.apps-row { display: flex; align-items: center; width: 830px; padding-bottom: 1px; }
.slot { width: 54.9px; display: flex; justify-content: center; flex: none; }
.search { width: 275px; height: 40px; margin: 0 4px 0 3px; flex: none; border-radius: 20px; border: 1px solid #505050; background: #3b3b3b; display: flex; align-items: center; font-size: 17px; color: #d6d6d6; }
.glass { margin-left: 14px; }
.search span { width: 167px; margin-left: 12px; letter-spacing: -.3px; }
.running { width: 50px; height: 50px; border-radius: 6px; border: 1px solid #343434; background: #292929; display: flex; flex-direction: column; align-items: center; padding-top: 9px; }
.running::after { content: ""; width: 20px; height: 4px; margin-top: 5px; border-radius: 2px; background: #4cc2ff; }
.tray { flex: 1; display: flex; align-items: center; padding: 0 24px 1px 219px; }
.tray p { text-align: center; white-space: nowrap; }
.cloud { margin-left: 23px; }
.lang { width: 30px; margin-left: 23px; }
.wifi { margin-left: 22px; }
.vol { margin-left: 10px; }
.batt { margin-left: 9px; }
.tray .clock { margin-left: auto; text-align: right; }
```
